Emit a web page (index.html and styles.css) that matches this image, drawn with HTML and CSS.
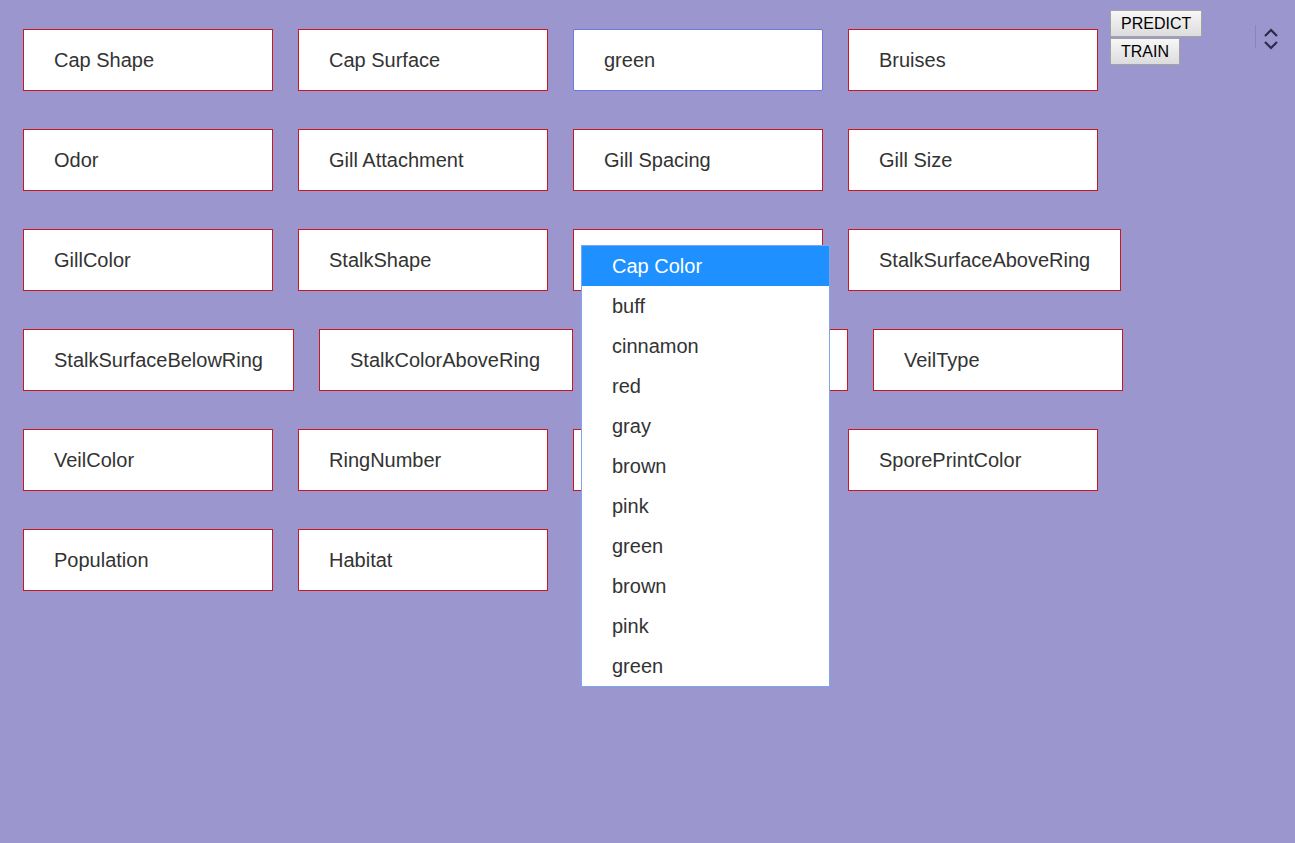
FILE: index.html
```html
<!DOCTYPE html>
<html>
<head>
<meta charset="utf-8">
<title>Mushroom</title>
<link rel="stylesheet" href="styles.css">
</head>
<body>
<div class="page">
  <div class="grid">
    <div class="row row-first">
      <div class="field">Cap Shape</div>
      <div class="field">Cap Surface</div>
      <div class="field focused">green</div>
      <div class="field">Bruises</div>
    </div>
    <div class="row">
      <div class="field">Odor</div>
      <div class="field">Gill Attachment</div>
      <div class="field">Gill Spacing</div>
      <div class="field">Gill Size</div>
    </div>
    <div class="row">
      <div class="field">GillColor</div>
      <div class="field">StalkShape</div>
      <div class="field anchor">
        <ul class="dropdown">
          <li class="opt selected">Cap Color</li>
          <li class="opt">buff</li>
          <li class="opt">cinnamon</li>
          <li class="opt">red</li>
          <li class="opt">gray</li>
          <li class="opt">brown</li>
          <li class="opt">pink</li>
          <li class="opt">green</li>
          <li class="opt">brown</li>
          <li class="opt">pink</li>
          <li class="opt">green</li>
        </ul>
      </div>
      <div class="field">StalkSurfaceAboveRing</div>
    </div>
    <div class="row">
      <div class="field">StalkSurfaceBelowRing</div>
      <div class="field wide">StalkColorAboveRing</div>
      <div class="field"></div>
      <div class="field">VeilType</div>
    </div>
    <div class="row">
      <div class="field">VeilColor</div>
      <div class="field">RingNumber</div>
      <div class="field"></div>
      <div class="field">SporePrintColor</div>
    </div>
    <div class="row">
      <div class="field">Population</div>
      <div class="field">Habitat</div>
    </div>
  </div>
  <div class="controls">
    <div class="buttons">
      <button class="btn">PREDICT</button>
      <button class="btn">TRAIN</button>
    </div>
    <div class="picker">
      <span class="divider"></span>
      <svg class="chev" width="16" height="22" viewBox="0 0 16 22">
        <path d="M2 8 L8 2 L14 8" fill="none" stroke="#2e2a4a" stroke-width="2.2"/>
        <path d="M2 14 L8 20 L14 14" fill="none" stroke="#2e2a4a" stroke-width="2.2"/>
      </svg>
    </div>
  </div>
</div>
</body>
</html>
```
FILE: styles.css
```css
html, body {
  margin: 0;
  padding: 0;
  background: #9b96cd;
  font-family: "Liberation Sans", Arial, sans-serif;
}
.page {
  display: flex;
  align-items: flex-start;
  padding: 10px 16px 0 23px;
  min-height: 833px;
}
.grid {
  flex: 0 0 1075px;
  width: 1075px;
  display: flex;
  flex-direction: column;
  gap: 38px;
  padding-top: 19px;
}
.row {
  display: flex;
  gap: 25px;
}
.field {
  flex: 0 0 auto;
  box-sizing: border-box;
  min-width: 250px;
  height: 62px;
  padding: 0 30px;
  background: #fff;
  border: 1px solid #c8171f;
  color: #333;
  font-size: 20px;
  line-height: 60px;
  white-space: nowrap;
}
.field.wide {
  min-width: 254px;
}
.field.focused {
  border-color: #6a78e0;
  border-radius: 2px;
}
.anchor {
  position: relative;
}
.dropdown {
  position: absolute;
  left: 7px;
  top: 15px;
  z-index: 5;
  width: 247px;
  margin: 0;
  padding: 0;
  list-style: none;
  background: #fff;
  border: 1px solid #7ea6ea;
}
.opt {
  height: 40px;
  line-height: 40px;
  padding-left: 30px;
  color: #333;
  font-size: 20px;
}
.opt.selected {
  background: #1e90ff;
  color: #fff;
}
.controls {
  flex: 1;
  display: flex;
  align-items: flex-start;
  margin-left: 12px;
}
.buttons {
  display: flex;
  flex-direction: column;
  align-items: flex-start;
  gap: 1px;
}
.btn {
  font-family: "Liberation Sans", Arial, sans-serif;
  font-size: 16px;
  height: 27px;
  padding: 0 10px;
  color: #000;
  background: linear-gradient(#f7f7f7, #dcdcdc);
  border: 1px solid #a3a3a3;
  border-radius: 0;
  line-height: 25px;
}
.picker {
  margin-left: auto;
  display: flex;
  align-items: flex-start;
  gap: 7px;
  padding-top: 15px;
}
.divider {
  display: block;
  width: 1px;
  height: 23px;
  background: #8a86b8;
}
.chev {
  display: block;
  margin-top: 3px;
}
```
